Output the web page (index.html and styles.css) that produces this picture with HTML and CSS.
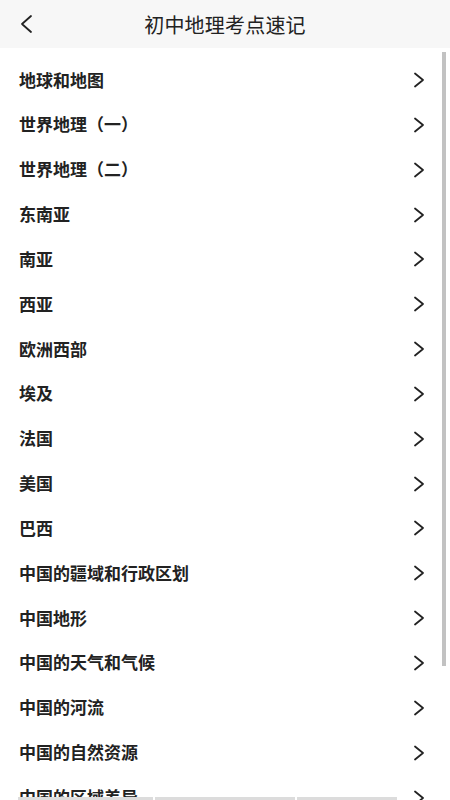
FILE: index.html
```html
<!DOCTYPE html>
<html lang="zh-CN">
<head>
    <meta charset="UTF-8">
    <meta name="viewport" content="width=device-width, initial-scale=1.0">
    <title>初中地理考点速记</title>
    <link rel="stylesheet" href="styles.css">
</head>
<body>
    <header class="top-bar">
        <button class="back-btn" aria-label="返回">
            <svg width="14" height="20" viewBox="0 0 14 20"><path d="M12 2 L3 10 L12 18" fill="none" stroke="#222" stroke-width="1.8" stroke-linecap="round" stroke-linejoin="round"/></svg>
        </button>
        <h1 class="title">初中地理考点速记</h1>
    </header>

    <main class="chapter-list" id="chapter-list"></main>

    <!-- scroll indicator and the peeking strip at the bottom -->
    <div class="scrollbar"></div>
    <div class="peek-strip">
        <span></span><span></span><span></span>
    </div>

    <script>
        const chapters = [
            '地球和地图', '世界地理（一）', '世界地理（二）', '东南亚', '南亚', '西亚',
            '欧洲西部', '埃及', '法国', '美国', '巴西', '中国的疆域和行政区划',
            '中国地形', '中国的天气和气候', '中国的河流', '中国的自然资源',
            '中国的区域差异', '北方地区'
        ];

        const list = document.getElementById('chapter-list');
        const arrow = '<svg class="arrow" width="12" height="16" viewBox="0 0 12 16"><path d="M2 1.5 L10 8 L2 14.5" fill="none" stroke="#222" stroke-width="1.8" stroke-linecap="round" stroke-linejoin="round"/></svg>';

        chapters.forEach(name => {
            const row = document.createElement('a');
            row.className = 'chapter';
            row.href = '#';
            row.innerHTML = '<span>' + name + '</span>' + arrow;
            list.appendChild(row);
        });
    </script>
</body>
</html>
```

FILE: styles.css
```css
* {
    margin: 0;
    padding: 0;
    box-sizing: border-box;
}

html, body {
    height: 100%;
    overflow: hidden;
}

body {
    font-family: 'Noto Sans CJK SC', 'Noto Sans', sans-serif;
    background-color: #fff;
    color: #222;
}

.top-bar {
    position: relative;
    height: 48px;
    background-color: #f7f7f7;
    display: flex;
    align-items: center;
    justify-content: center;
}

.back-btn {
    position: absolute;
    left: 19px;
    top: 14px;
    background: none;
    border: none;
    display: flex;
}

.title {
    font-size: 20px;
    font-weight: 400;
    color: #222;
    letter-spacing: 0.2px;
}

.chapter-list {
    display: flex;
    flex-direction: column;
    padding-top: 8.6px;
}

.chapter {
    height: 44.85px;
    flex-shrink: 0;
    display: flex;
    align-items: center;
    justify-content: space-between;
    padding: 0 25px 0 19px;
    font-size: 17px;
    font-weight: 700;
    color: #222;
    text-decoration: none;
}

.chapter .arrow {
    margin-top: 2px;
}

.scrollbar {
    position: absolute;
    right: 4px;
    top: 52px;
    width: 4px;
    height: 614px;
    background-color: #c2c2c2;
}

.peek-strip {
    position: absolute;
    left: 18px;
    bottom: 0;
    height: 3px;
    width: 380px;
    display: flex;
    gap: 2px;
}

.peek-strip span {
    background-color: #dcdcdc;
}

.peek-strip span:nth-child(1) { width: 135px; }
.peek-strip span:nth-child(2) { width: 140px; }
.peek-strip span:nth-child(3) { width: 100px; }
```
